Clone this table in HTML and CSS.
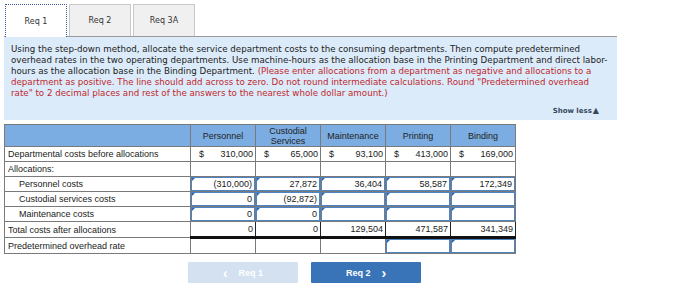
FILE: index.html
```html
<!DOCTYPE html>
<html>
<head>
<meta charset="utf-8">
<link rel="stylesheet" href="styles.css">
</head>
<body>
<div class="page">
  <div class="tabs">
    <div class="tab active">Req 1</div>
    <div class="tab">Req 2</div>
    <div class="tab">Req 3A</div>
  </div>
  <div class="panel">
    <p class="instr">Using the step-down method, allocate the service department costs to the consuming departments. Then compute predetermined<br>overhead rates in the two operating departments. Use machine-hours as the allocation base in the Printing Department and direct labor-<br>hours as the allocation base in the Binding Department. <span class="red">(Please enter allocations from a department as negative and allocations to a<br>department as positive. The line should add across to zero. Do not round intermediate calculations. Round "Predetermined overhead<br>rate" to 2 decimal places and rest of the answers to the nearest whole dollar amount.)</span></p>
    <div class="showless">Show less<span class="tri">&#9650;</span></div>
  </div>
  <table class="grid">
    <colgroup>
      <col class="c-label"><col class="c-num"><col class="c-num"><col class="c-num"><col class="c-num"><col class="c-num">
    </colgroup>
    <tr class="head">
      <th></th>
      <th>Personnel</th>
      <th>Custodial<br>Services</th>
      <th>Maintenance</th>
      <th>Printing</th>
      <th>Binding</th>
    </tr>
    <tr>
      <td class="lbl">Departmental costs before allocations</td>
      <td class="money"><span>$</span><span>310,000</span></td>
      <td class="money"><span>$</span><span>65,000</span></td>
      <td class="money"><span>$</span><span>93,100</span></td>
      <td class="money"><span>$</span><span>413,000</span></td>
      <td class="money"><span>$</span><span>169,000</span></td>
    </tr>
    <tr>
      <td class="lbl">Allocations:</td>
      <td></td><td></td><td></td><td></td><td></td>
    </tr>
    <tr>
      <td class="lbl ind">Personnel costs</td>
      <td class="ic"><div class="inp">(310,000)</div></td>
      <td class="ic"><div class="inp">27,872</div></td>
      <td class="ic"><div class="inp">36,404</div></td>
      <td class="ic"><div class="inp">58,587</div></td>
      <td class="ic"><div class="inp">172,349</div></td>
    </tr>
    <tr>
      <td class="lbl ind">Custodial services costs</td>
      <td class="ic"><div class="inp">0</div></td>
      <td class="ic"><div class="inp">(92,872)</div></td>
      <td class="ic"><div class="inp">&nbsp;</div></td>
      <td class="ic"><div class="inp">&nbsp;</div></td>
      <td class="ic"><div class="inp">&nbsp;</div></td>
    </tr>
    <tr>
      <td class="lbl ind">Maintenance costs</td>
      <td class="ic"><div class="inp">0</div></td>
      <td class="ic"><div class="inp">0</div></td>
      <td class="ic"><div class="inp">&nbsp;</div></td>
      <td class="ic"><div class="inp">&nbsp;</div></td>
      <td class="ic"><div class="inp">&nbsp;</div></td>
    </tr>
    <tr class="total">
      <td class="lbl">Total costs after allocations</td>
      <td class="num">0</td>
      <td class="num">0</td>
      <td class="num">129,504</td>
      <td class="num">471,587</td>
      <td class="num">341,349</td>
    </tr>
    <tr>
      <td class="lbl">Predetermined overhead rate</td>
      <td></td><td></td><td></td>
      <td class="ic"><div class="inp">&nbsp;</div></td>
      <td class="ic"><div class="inp">&nbsp;</div></td>
    </tr>
  </table>
  <div class="nav">
    <div class="btn prev"><span class="chev">&#8249;</span>Req 1</div>
    <div class="btn next">Req 2<span class="chev r">&#8250;</span></div>
  </div>
</div>
</body>
</html>
```

FILE: styles.css
```css
html, body {
  margin: 0;
  padding: 0;
  background: #fff;
}
.page {
  padding: 4px 0 0 4px;
  width: 613px;
}
.tabs {
  display: flex;
  gap: 2px;
  padding-left: 1px;
  height: 32px;
}
.tab {
  width: 62px;
  border: 1px solid #c8c8c8;
  border-bottom: none;
  background: #f0f0f0;
  font-family: "DejaVu Sans", Verdana, sans-serif;
  font-size: 8px;
  color: #333;
  display: flex;
  align-items: center;
  justify-content: center;
  box-sizing: border-box;
  height: 32px;
}
.tab.active {
  background: #fff;
  border: 1px dotted #3a5a9a;
  border-bottom: none;
  position: relative;
  z-index: 1;
  height: 33px;
}
.panel {
  background: #dcebf9;
  border-top: 1px solid #9a9a9a;
  padding: 7px 4px 3px 7px;
  height: 73px;
}
.instr {
  margin: 0;
  font-family: "DejaVu Sans", Verdana, sans-serif;
  font-size: 8.7px;
  line-height: 10.9px;
  color: #222;
  white-space: nowrap;
}
.red {
  color: #c0272d;
}
.showless {
  text-align: right;
  font-family: "DejaVu Sans", Verdana, sans-serif;
  font-weight: bold;
  font-size: 7px;
  color: #34495e;
  margin-top: 7px;
  padding-right: 14px;
}
.tri {
  font-size: 8px;
  margin-left: 1px;
}
.grid {
  margin-top: 4px;
  border-collapse: collapse;
  font-family: "Liberation Sans", Arial, sans-serif;
  font-size: 9px;
  color: #1a1a1a;
  table-layout: fixed;
  width: 512px;
}
.c-label { width: 186px; }
.c-num { width: 65px; }
.grid th, .grid td {
  border: 1px solid #7a7a7a;
  padding: 0;
  height: 14px;
}
.grid tr.head th {
  background: #7badE3;
  font-weight: normal;
  height: 21px;
  line-height: 10px;
  text-align: center;
  color: #222;
}
.lbl {
  padding-left: 3px !important;
  white-space: nowrap;
}
.lbl.ind {
  padding-left: 14px !important;
}
.money span:first-child {
  float: left;
  padding-left: 8px;
}
.money span:last-child {
  float: right;
  padding-right: 2px;
}
.num {
  text-align: right;
  padding-right: 2px !important;
}
.ic {
  padding: 0 !important;
}
.inp {
  position: relative;
  border: 1px solid #4f84c4;
  height: 12px;
  line-height: 12px;
  text-align: right;
  padding-right: 2px;
  background: #fff;
}
.inp::before {
  content: "";
  position: absolute;
  left: 0;
  top: 0;
  border-top: 3px solid #2e67b1;
  border-right: 3px solid transparent;
}
.total td {
  border-top: 1px solid #222;
}
.total td.num {
  border: 1px solid #222;
  border-bottom: 3px solid #111;
}
.nav {
  display: flex;
  gap: 13px;
  margin-top: 8px;
  padding-left: 184px;
}
.btn {
  width: 110px;
  height: 21px;
  border-radius: 1px;
  display: flex;
  align-items: center;
  justify-content: center;
  font-family: "Liberation Sans", Arial, sans-serif;
  font-weight: bold;
  font-size: 9px;
  color: #fff;
}
.btn.prev {
  background: #d3e1f0;
}
.btn.next {
  background: #3a74b8;
}
.chev {
  font-size: 14px;
  line-height: 10px;
  margin-right: 11px;
  font-weight: bold;
}
.chev.r {
  margin-right: 0;
  margin-left: 11px;
}
```
